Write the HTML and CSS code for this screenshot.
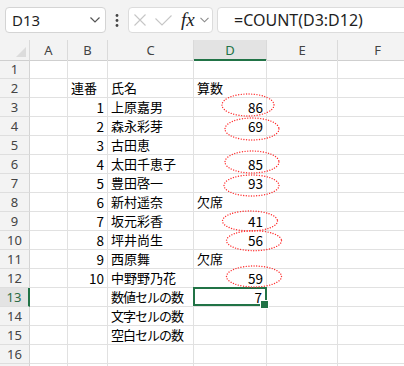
FILE: index.html
```html
<!DOCTYPE html>
<html lang="ja">
<head>
    <meta charset="UTF-8">
    <meta name="viewport" content="width=device-width, initial-scale=1.0">
    <title>COUNT</title>
    <link rel="stylesheet" href="styles.css">
</head>
<body>
<div class="app">
    <!-- Formula bar -->
    <div class="formula-bar">
        <div class="name-box">
            <span>D13</span>
            <svg width="10" height="6" viewBox="0 0 10 6"><path d="M0.5 0.5 L5 5 L9.5 0.5" fill="none" stroke="#555" stroke-width="1.2"/></svg>
        </div>
        <div class="bar-dots">
            <svg width="4" height="13" viewBox="0 0 4 13"><circle cx="2" cy="1.5" r="1.4" fill="#444"/><circle cx="2" cy="6.5" r="1.4" fill="#444"/><circle cx="2" cy="11.5" r="1.4" fill="#444"/></svg>
        </div>
        <div class="fx-box">
            <svg class="ic-x" width="12" height="12" viewBox="0 0 12 12"><path d="M0.5 0.5 L11.5 11.5 M11.5 0.5 L0.5 11.5" stroke="#c6c6c6" stroke-width="1.1"/></svg>
            <svg class="ic-check" width="17" height="11" viewBox="0 0 17 11"><path d="M0.5 3.5 L7 10 L16.5 0.5" fill="none" stroke="#c6c6c6" stroke-width="1.1"/></svg>
            <span class="fx">fx</span>
            <svg class="ic-down" width="9" height="6" viewBox="0 0 9 6"><path d="M0.5 0.8 L4.5 4.8 L8.5 0.8" fill="none" stroke="#8a8a8a" stroke-width="1.1"/></svg>
        </div>
        <div class="formula-input">=COUNT(D3:D12)</div>
    </div>

    <!-- Sheet grid -->
    <div class="sheet">
        <div class="row head">
            <div class="corner"><span class="tri"></span></div>
            <div>A</div><div>B</div><div>C</div><div class="sel">D</div><div>E</div><div>F</div>
        </div>
        <div class="row"><div class="rh">1</div><div></div><div></div><div></div><div></div><div></div><div></div></div>
        <div class="row"><div class="rh">2</div><div></div><div>連番</div><div>氏名</div><div>算数</div><div></div><div></div></div>
        <div class="row"><div class="rh">3</div><div></div><div class="num">1</div><div>上原嘉男</div><div class="num">86</div><div></div><div></div></div>
        <div class="row"><div class="rh">4</div><div></div><div class="num">2</div><div>森永彩芽</div><div class="num">69</div><div></div><div></div></div>
        <div class="row"><div class="rh">5</div><div></div><div class="num">3</div><div>古田恵</div><div></div><div></div><div></div></div>
        <div class="row"><div class="rh">6</div><div></div><div class="num">4</div><div>太田千恵子</div><div class="num">85</div><div></div><div></div></div>
        <div class="row"><div class="rh">7</div><div></div><div class="num">5</div><div>豊田啓一</div><div class="num">93</div><div></div><div></div></div>
        <div class="row"><div class="rh">8</div><div></div><div class="num">6</div><div>新村遥奈</div><div>欠席</div><div></div><div></div></div>
        <div class="row"><div class="rh">9</div><div></div><div class="num">7</div><div>坂元彩香</div><div class="num">41</div><div></div><div></div></div>
        <div class="row"><div class="rh">10</div><div></div><div class="num">8</div><div>坪井尚生</div><div class="num">56</div><div></div><div></div></div>
        <div class="row"><div class="rh">11</div><div></div><div class="num">9</div><div>西原舞</div><div>欠席</div><div></div><div></div></div>
        <div class="row"><div class="rh">12</div><div></div><div class="num">10</div><div>中野野乃花</div><div class="num">59</div><div></div><div></div></div>
        <div class="row"><div class="rh sel">13</div><div></div><div></div><div class="kana">数値セルの数</div><div class="num active">7</div><div></div><div></div></div>
        <div class="row"><div class="rh">14</div><div></div><div></div><div class="kana">文字セルの数</div><div></div><div></div><div></div></div>
        <div class="row"><div class="rh">15</div><div></div><div></div><div class="kana">空白セルの数</div><div></div><div></div><div></div></div>
        <div class="row"><div class="rh">16</div><div></div><div></div><div></div><div></div><div></div><div></div></div>
        <div class="row"><div class="rh"></div><div></div><div></div><div></div><div></div><div></div><div></div></div>
    </div>

    <!-- Red dotted circles around the counted numbers -->
    <svg class="marks" width="404" height="366" viewBox="0 0 404 366">
        <ellipse cx="248" cy="105" rx="26" ry="11"/>
        <ellipse cx="252" cy="129" rx="27" ry="11"/>
        <ellipse cx="252" cy="162" rx="27" ry="11"/>
        <ellipse cx="251.5" cy="185.5" rx="27.5" ry="10.5"/>
        <ellipse cx="250" cy="221" rx="27.5" ry="10"/>
        <ellipse cx="254" cy="240.7" rx="27.5" ry="10"/>
        <ellipse cx="254" cy="276.5" rx="27.5" ry="10.5"/>
    </svg>
</div>
</body>
</html>
```

FILE: styles.css
```css
/* Global styles */
* {
    box-sizing: border-box;
}

body {
    margin: 0;
    background-color: #fff;
    font-family: "Noto Sans", sans-serif;
}

.app {
    position: relative;
    width: 404px;
    height: 366px;
    overflow: hidden;
}

/* Formula bar */
.formula-bar {
    height: 40px;
    background-color: #f3f3f3;
    display: flex;
    align-items: flex-start;
    padding: 7px 0 0 5px;
}

.name-box {
    width: 101px;
    height: 26px;
    background-color: #fff;
    border: 1px solid #d4d4d4;
    border-radius: 4px;
    display: flex;
    align-items: center;
    justify-content: space-between;
    padding: 0 5px 0 6px;
    font-size: 15px;
    color: #1f1f1f;
}

.bar-dots {
    width: 22px;
    height: 26px;
    display: flex;
    align-items: center;
    justify-content: center;
}

.fx-box {
    width: 85px;
    height: 26px;
    background-color: #fff;
    border: 1px solid #dcdcdc;
    border-radius: 4px;
    display: flex;
    align-items: center;
    padding-left: 5px;
}

.ic-check {
    margin-left: 9px;
}

.fx {
    margin-left: 9px;
    font-family: "Liberation Serif", serif;
    font-style: italic;
    font-size: 19px;
    line-height: 20px;
    color: #222;
}

.ic-down {
    margin-left: 5px;
}

.formula-input {
    flex: 1;
    height: 26px;
    margin-left: 4px;
    margin-right: -8px;
    background-color: #fff;
    border: 1px solid #dcdcdc;
    border-radius: 4px;
    padding-left: 16px;
    font-size: 16px;
    line-height: 24px;
    color: #1f1f1f;
}

/* Sheet */
.row {
    display: grid;
    grid-template-columns: 30px 38px 40px 86px 73px 71px 80px;
    height: 19px;
}

.row > div {
    border-right: 1px solid #e1e1e1;
    border-bottom: 1px solid #e1e1e1;
    padding: 0 3px;
    line-height: 18px;
    font-family: "Noto Sans CJK JP", sans-serif;
    font-size: 13px;
    white-space: nowrap;
    color: #000;
}

.row > .num {
    text-align: right;
    font-size: 13.5px;
}

.row > .kana {
    letter-spacing: -1px;
}

.row.head {
    height: 20px;
    background-color: #f3f3f3;
}

.row.head > div {
    border-right-color: #dadada;
    border-bottom-color: #cfcfcf;
    text-align: center;
    padding-top: 1px;
    line-height: 18px;
    font-family: "Noto Sans", sans-serif;
    font-size: 13px;
    color: #444;
}

.row.head > .corner {
    position: relative;
}

.tri {
    position: absolute;
    right: 3px;
    bottom: 3px;
    width: 0;
    height: 0;
    border-left: 10px solid transparent;
    border-bottom: 10px solid #dcdcdc;
}

.row > .rh {
    background-color: #f3f3f3;
    border-right-color: #d4d4d4;
    border-bottom-color: #dedede;
    text-align: center;
    padding: 0;
    font-family: "Noto Sans", sans-serif;
    font-size: 13px;
    color: #444;
}

/* Selected column / row headers */
.row.head > .sel {
    background-color: #e3e3e3;
    border-bottom: 2px solid #217346;
    color: #217346;
}

.row > .rh.sel {
    background-color: #e3e3e3;
    border-right: 2px solid #217346;
    color: #2b6b45;
}

/* Active cell */
.row > .active {
    position: relative;
    padding-right: 4px;
}

.active::after {
    content: "";
    position: absolute;
    top: -1px;
    left: -1px;
    right: -1px;
    bottom: 0;
    border: 2px solid #217346;
}

.active::before {
    content: "";
    position: absolute;
    right: -3px;
    bottom: -3px;
    width: 7px;
    height: 7px;
    background-color: #217346;
    border: 1px solid #fff;
    z-index: 1;
}

/* Circles */
.marks {
    position: absolute;
    top: 0;
    left: 0;
    pointer-events: none;
}

.marks ellipse {
    fill: none;
    stroke: #ff3030;
    stroke-width: 1.4;
    stroke-dasharray: 0.01 2.6;
    stroke-linecap: round;
}
```
